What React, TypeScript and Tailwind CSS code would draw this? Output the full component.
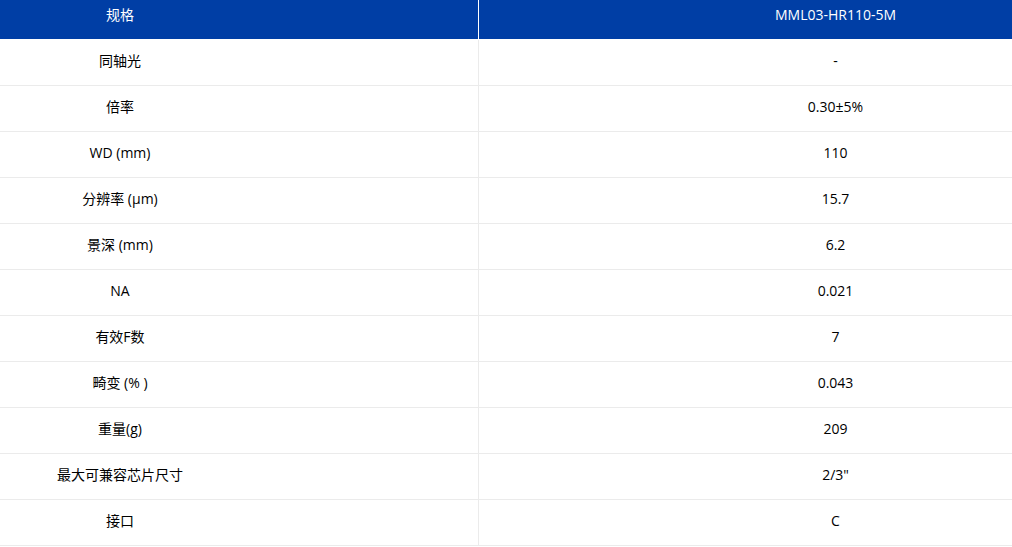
const rows: [string, string][] = [
  ['同轴光', '-'],
  ['倍率', '0.30±5%'],
  ['WD (mm)', '110'],
  ['分辨率 (μm)', '15.7'],
  ['景深 (mm)', '6.2'],
  ['NA', '0.021'],
  ['有效F数', '7'],
  ['畸变 (% )', '0.043'],
  ['重量(g)', '209'],
  ['最大可兼容芯片尺寸', '2/3"'],
  ['接口', 'C'],
];

export default function App() {
  return (
    <div className="w-[1012px] bg-white text-[14px] text-black" style={{ fontFamily: '"Open Sans", "Noto Sans CJK SC", sans-serif' }}>
      <div className="flex h-[40px] border-b border-white bg-[#003ea5] text-white">
        <div className="flex w-[478px] items-center justify-center pr-[238px] pb-[10px]">规格</div>
        <div className="w-px bg-white" />
        <div className="flex flex-1 items-center justify-center pl-[180px] pb-[10px]">MML03-HR110-5M</div>
      </div>
      {rows.map(([label, value]) => (
        <div key={label} className="flex h-[46px] border-b border-[#ebebeb]">
          <div className="flex w-[478px] items-center justify-center pr-[238px] pb-[4px]">{label}</div>
          <div className="w-px bg-[#ebebeb]" />
          <div className="flex flex-1 items-center justify-center pl-[180px] pb-[4px]">{value}</div>
        </div>
      ))}
    </div>
  );
}
